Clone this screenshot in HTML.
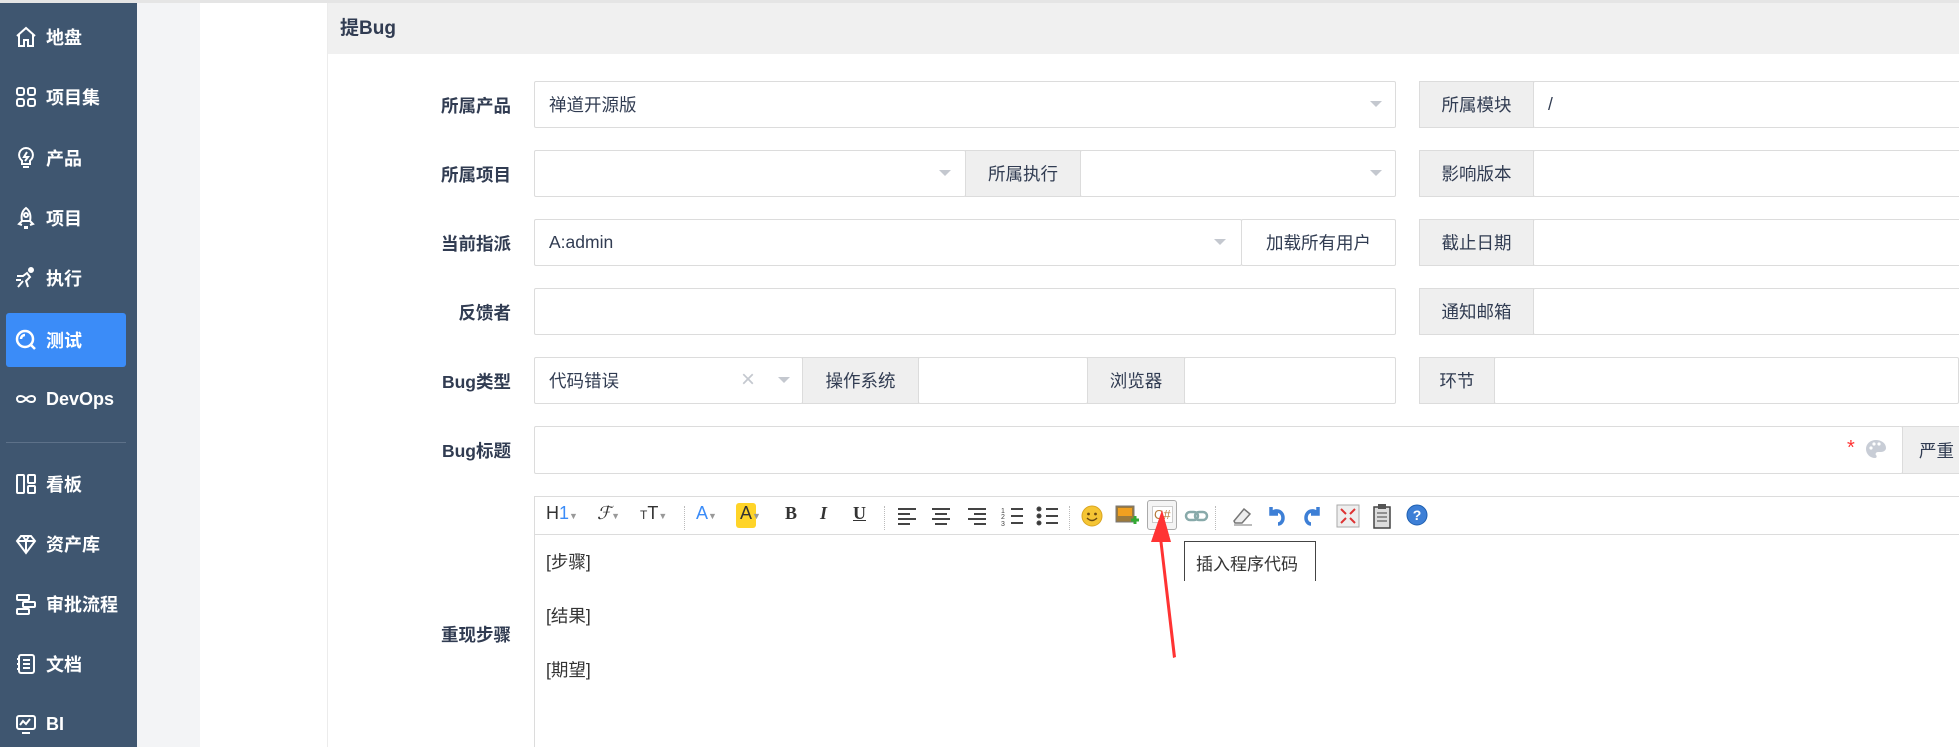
<!DOCTYPE html>
<html style="width:1959px;height:747px;overflow:hidden"><head><meta charset="utf-8"><style>
*{box-sizing:border-box;margin:0;padding:0}
body{width:1959px;height:747px;overflow:hidden;position:relative;background:#fff;font-family:"Liberation Sans","Noto Sans CJK SC",sans-serif;color:#313c52;font-size:17px}
.a{position:absolute}
#sb{left:0;top:0;width:137px;height:747px;background:#3f5670;border-top:3px solid #e5e5e5}
.ni{position:absolute;left:14px;color:#fff;font-weight:bold;font-size:18px;display:flex;align-items:center;gap:8px;height:30px}
.ni svg{width:24px;height:24px;fill:none;stroke:#fff;stroke-width:2}
.lab{position:absolute;width:180px;text-align:right;left:331px;font-weight:bold;font-size:17.5px;color:#313c52}
.box{position:absolute;border:1px solid #dcdcdc;background:#fff;border-radius:2px;font-size:17.5px;color:#313c52;display:flex;align-items:center;padding-left:14px}
.add{position:absolute;border:1px solid #dcdcdc;background:#efefef;font-size:17.5px;color:#313c52;display:flex;align-items:center;justify-content:center}
.car{position:absolute;width:0;height:0;border-left:6px solid transparent;border-right:6px solid transparent;border-top:6px solid #c4c8cf}
.tb{position:absolute;top:503px;font-size:18px;color:#333}
.sep{position:absolute;top:506px;height:24px;border-left:1px dotted #bbb}
</style></head><body>
<div class="a" style="left:0;top:0;width:1959px;height:3px;background:#e5e5e5"></div>
<div id="sb" class="a"></div>
<div class="ni" style="top:22px"><svg viewBox="0 0 24 24"><path d="M3 11 12 3l9 8M5 9v12h5v-6h4v6h5V9"/></svg>地盘</div>
<div class="ni" style="top:82px"><svg viewBox="0 0 24 24"><rect x="3" y="3" width="7" height="7" rx="2"/><rect x="14" y="3" width="7" height="7" rx="2"/><rect x="3" y="14" width="7" height="7" rx="2"/><rect x="14" y="14" width="7" height="7" rx="2"/></svg>项目集</div>
<div class="ni" style="top:143px"><svg viewBox="0 0 24 24"><path d="M12 2a7 7 0 0 0-4 12.7V18h8v-3.3A7 7 0 0 0 12 2zM9 21h6M13 6l-3 5h4l-3 4"/></svg>产品</div>
<div class="ni" style="top:203px"><svg viewBox="0 0 24 24"><path d="M12 2c4 3 5 8 4 13H8C7 10 8 5 12 2zM8 15l-3 3 3 1M16 15l3 3-3 1M11 20v3M13 20v3"/><circle cx="12" cy="9" r="2"/></svg>项目</div>
<div class="ni" style="top:263px"><svg viewBox="0 0 24 24"><circle cx="17" cy="4" r="2" fill="#fff"/><path d="M3 10h6l4-3 3 4-4 4 2 6M9 15l-5 6M2 14h5"/></svg>执行</div>
<div class="a" style="left:6px;top:313px;width:120px;height:54px;background:#3b8cf8;border-radius:3px"></div>
<div class="ni" style="top:325px"><svg viewBox="0 0 24 24" style="stroke-width:2.5"><circle cx="11" cy="11" r="8"/><path d="M17 17l4 4M7 11a4 4 0 0 1 4-4"/></svg>测试</div>
<div class="ni" style="top:384px"><svg viewBox="0 0 24 24"><path d="M12 12c-3-4-9-4-9 0s6 4 9 0 9-4 9 0-6 4-9 0z"/></svg>DevOps</div>
<div class="a" style="left:6px;top:442px;width:120px;height:1px;background:#5d7189"></div>
<div class="ni" style="top:469px"><svg viewBox="0 0 24 24"><rect x="3" y="3" width="7" height="18" rx="1"/><rect x="14" y="3" width="7" height="8" rx="1"/><rect x="14" y="14" width="7" height="7" rx="1"/></svg>看板</div>
<div class="ni" style="top:529px"><svg viewBox="0 0 24 24"><path d="M3 9l4-5h10l4 5-9 12zM3 9h18M9 4l3 5 3-5M12 9v12"/></svg>资产库</div>
<div class="ni" style="top:589px"><svg viewBox="0 0 24 24"><rect x="3" y="3" width="12" height="5" rx="1"/><rect x="9" y="10" width="12" height="5" rx="1"/><rect x="3" y="17" width="12" height="5" rx="1"/></svg>审批流程</div>
<div class="ni" style="top:649px"><svg viewBox="0 0 24 24"><rect x="5" y="3" width="15" height="18" rx="2"/><path d="M9 8h7M9 12h7M9 16h7M3 7h3M3 12h3M3 17h3"/></svg>文档</div>
<div class="ni" style="top:709px"><svg viewBox="0 0 24 24"><rect x="3" y="4" width="18" height="13" rx="2"/><path d="M6 13l3-4 3 3 4-5M8 21h8"/></svg>BI</div>

<div class="a" style="left:137px;top:3px;width:63px;height:744px;background:#f3f4f6"></div>
<div class="a" style="left:327px;top:3px;width:1px;height:744px;background:#ececec"></div>
<div class="a" style="left:328px;top:3px;width:1631px;height:51px;background:#f0f0f0"></div>
<div class="a" style="left:340px;top:13px;font-weight:bold;font-size:19px;color:#313c52">提Bug</div>

<div class="lab" style="top:93px">所属产品</div>
<div class="box" style="left:534px;top:81px;width:862px;height:47px">禅道开源版</div>
<div class="car" style="left:1370px;top:101px"></div>
<div class="add" style="left:1419px;top:81px;width:115px;height:47px">所属模块</div>
<div class="box" style="left:1533px;top:81px;width:440px;height:47px">/</div>

<div class="lab" style="top:162px">所属项目</div>
<div class="box" style="left:534px;top:150px;width:432px;height:47px"></div>
<div class="car" style="left:939px;top:170px"></div>
<div class="add" style="left:965px;top:150px;width:116px;height:47px">所属执行</div>
<div class="box" style="left:1080px;top:150px;width:316px;height:47px"></div>
<div class="car" style="left:1370px;top:170px"></div>
<div class="add" style="left:1419px;top:150px;width:115px;height:47px">影响版本</div>
<div class="box" style="left:1533px;top:150px;width:440px;height:47px"></div>

<div class="lab" style="top:231px">当前指派</div>
<div class="box" style="left:534px;top:219px;width:708px;height:47px">A:admin</div>
<div class="car" style="left:1214px;top:239px"></div>
<div class="box" style="left:1241px;top:219px;width:155px;height:47px;justify-content:center;padding:0">加载所有用户</div>
<div class="add" style="left:1419px;top:219px;width:115px;height:47px">截止日期</div>
<div class="box" style="left:1533px;top:219px;width:440px;height:47px"></div>

<div class="lab" style="top:300px">反馈者</div>
<div class="box" style="left:534px;top:288px;width:862px;height:47px"></div>
<div class="add" style="left:1419px;top:288px;width:115px;height:47px">通知邮箱</div>
<div class="box" style="left:1533px;top:288px;width:440px;height:47px"></div>

<div class="lab" style="top:369px">Bug类型</div>
<div class="box" style="left:534px;top:357px;width:269px;height:47px">代码错误</div>
<div class="a" style="left:741px;top:366px;font-size:24px;color:#c4c8cf">×</div>
<div class="car" style="left:778px;top:377px"></div>
<div class="add" style="left:802px;top:357px;width:117px;height:47px">操作系统</div>
<div class="box" style="left:918px;top:357px;width:170px;height:47px"></div>
<div class="add" style="left:1087px;top:357px;width:98px;height:47px">浏览器</div>
<div class="box" style="left:1184px;top:357px;width:212px;height:47px"></div>
<div class="add" style="left:1419px;top:357px;width:76px;height:47px">环节</div>
<div class="box" style="left:1494px;top:357px;width:465px;height:47px"></div>

<div class="lab" style="top:438px">Bug标题</div>
<div class="box" style="left:534px;top:426px;width:1369px;height:48px"></div>
<div class="a" style="left:1847px;top:437px;color:#f33;font-size:20px">*</div>
<svg class="a" style="left:1864px;top:438px" width="24" height="24" viewBox="0 0 24 24"><path d="M12 2C6 2 2 6 2 11c0 5 4 9 9 9 2 0 2-2 1-3s0-3 2-3h3c3 0 5-2 5-4 0-5-5-8-10-8z" fill="#c8cdd6"/><circle cx="7" cy="10" r="1.6" fill="#fff"/><circle cx="10" cy="6" r="1.6" fill="#fff"/><circle cx="15" cy="6" r="1.6" fill="#fff"/></svg>
<div class="add" style="left:1902px;top:426px;width:57px;height:48px;justify-content:flex-start;padding-left:16px;border-right:none;overflow:hidden;white-space:nowrap">严重</div>

<div class="lab" style="top:622px">重现步骤</div>
<div class="a" style="left:534px;top:496px;width:1425px;height:251px;border:1px solid #dcdcdc;border-right:none;border-bottom:none"></div>
<div class="a" style="left:535px;top:534px;width:1424px;height:1px;background:#dcdcdc"></div>
<div class="tb" style="left:546px">H<span style="color:#3b8cf8">1</span><span style="font-size:9px;color:#999">▼</span></div>
<div class="tb" style="left:597px;font-style:italic;font-family:'Liberation Serif',serif">ℱ<span style="font-size:9px;color:#999">▼</span></div>
<div class="tb" style="left:640px"><span style="font-size:12px">T</span>T<span style="font-size:9px;color:#999">▼</span></div>
<div class="sep" style="left:684px"></div>
<div class="tb" style="left:696px;color:#3b8cf8">A<span style="font-size:9px;color:#999">▼</span></div>
<div class="a" style="left:736px;top:503px;width:20px;height:25px;background:#ffd428;border-radius:3px"></div>
<div class="tb" style="left:740px">A<span style="font-size:9px;color:#999">▼</span></div>
<div class="tb" style="left:785px;font-weight:bold;font-family:'Liberation Serif',serif">B</div>
<div class="tb" style="left:820px;font-weight:bold;font-style:italic;font-family:'Liberation Serif',serif">I</div>
<div class="tb" style="left:853px;font-weight:bold;text-decoration:underline;font-family:'Liberation Serif',serif">U</div>
<div class="sep" style="left:884px"></div>
<svg class="a" style="left:896px;top:505px" width="220" height="22" viewBox="0 0 220 22" stroke="#444" stroke-width="2">
<path d="M2 4h18M2 9h12M2 14h18M2 19h12"/>
<path d="M36 4h18M39 9h12M36 14h18M39 19h12"/>
<path d="M72 4h18M78 9h12M72 14h18M78 19h12"/>
<path d="M115 4h12M115 11h12M115 18h12"/><text x="105" y="8" font-size="7" stroke="none" fill="#444">1</text><text x="105" y="14" font-size="7" stroke="none" fill="#444">2</text><text x="105" y="21" font-size="7" stroke="none" fill="#444">3</text>
<path d="M150 4h12M150 11h12M150 18h12"/><circle cx="143" cy="4" r="1.5"/><circle cx="143" cy="11" r="1.5"/><circle cx="143" cy="18" r="1.5"/>
</svg>
<div class="sep" style="left:1069px"></div>
<svg class="a" style="left:1080px;top:504px" width="24" height="24"><circle cx="12" cy="12" r="10" fill="#f5c534" stroke="#d9a521"/><circle cx="8.5" cy="10" r="1.4" fill="#6b4a12"/><circle cx="15.5" cy="10" r="1.4" fill="#6b4a12"/><path d="M7 14q5 5 10 0" stroke="#6b4a12" fill="none" stroke-width="1.4"/></svg>
<svg class="a" style="left:1114px;top:503px" width="26" height="26"><rect x="2" y="3" width="18" height="16" fill="#9c7a3c" stroke="#777"/><rect x="4" y="5" width="14" height="8" fill="#f0a020"/><path d="M17 17h8M21 13v8" stroke="#3a3" stroke-width="3"/></svg>
<div class="a" style="left:1147px;top:500px;width:30px;height:30px;border:1px solid #aaa;border-radius:3px;background:#f4f4f4"></div>
<div class="a" style="left:1152px;top:506px;font-size:13px;color:#b67a3a;border:1px solid #ccc;background:#fff;padding:0 1px">C#</div>
<svg class="a" style="left:1184px;top:506px" width="26" height="20"><rect x="2" y="6" width="12" height="8" rx="4" fill="none" stroke="#8aa" stroke-width="2.5"/><rect x="11" y="6" width="12" height="8" rx="4" fill="none" stroke="#8aa" stroke-width="2.5"/></svg>
<div class="sep" style="left:1215px"></div>
<svg class="a" style="left:1230px;top:503px" width="26" height="26"><path d="M4 18l10-12 6 5-8 9H5z" fill="#eee" stroke="#777" stroke-width="1.5"/><path d="M4 22h18" stroke="#777"/></svg>
<svg class="a" style="left:1265px;top:503px" width="24" height="24"><path d="M6 4v7h7M6 11c3-5 12-4 12 4 0 3-2 6-5 6" fill="none" stroke="#3d7fd6" stroke-width="3.5"/></svg>
<svg class="a" style="left:1300px;top:503px" width="24" height="24"><path d="M18 4v7h-7M18 11c-3-5-12-4-12 4 0 3 2 6 5 6" fill="none" stroke="#3d7fd6" stroke-width="3.5"/></svg>
<svg class="a" style="left:1335px;top:503px" width="26" height="26"><rect x="2" y="2" width="22" height="22" fill="#eee" stroke="#aaa"/><path d="M6 6l5 5M20 6l-5 5M6 20l5-5M20 20l-5-5" stroke="#d33" stroke-width="2"/></svg>
<svg class="a" style="left:1370px;top:502px" width="24" height="28"><rect x="4" y="5" width="16" height="21" fill="#ddd" stroke="#444" stroke-width="1.5"/><rect x="8" y="2" width="8" height="5" fill="#555"/><path d="M7 11h10M7 15h10M7 19h10" stroke="#444"/></svg>
<svg class="a" style="left:1405px;top:503px" width="24" height="24"><circle cx="12" cy="12" r="10" fill="#3d7fd6" stroke="#1e5fb0"/><text x="12" y="17" font-size="14" text-anchor="middle" fill="#fff" font-weight="bold" font-family="Liberation Sans">?</text></svg>
<div class="a" style="left:546px;top:549px;font-size:17.5px;color:#333">[步骤]</div>
<div class="a" style="left:546px;top:603px;font-size:17.5px;color:#333">[结果]</div>
<div class="a" style="left:546px;top:657px;font-size:17.5px;color:#333">[期望]</div>
<div class="a" style="left:1184px;top:541px;width:132px;height:40px;border:1px solid #444;border-bottom:none;background:#fff;font-size:17px;color:#333;padding:8px 0 0 11px">插入程序代码</div>
<svg class="a" style="left:1140px;top:510px" width="50" height="150"><path d="M22 0L11 32h8.5L33 148l3-1L22.5 32H31z" fill="#f33"/></svg>
</body></html>
